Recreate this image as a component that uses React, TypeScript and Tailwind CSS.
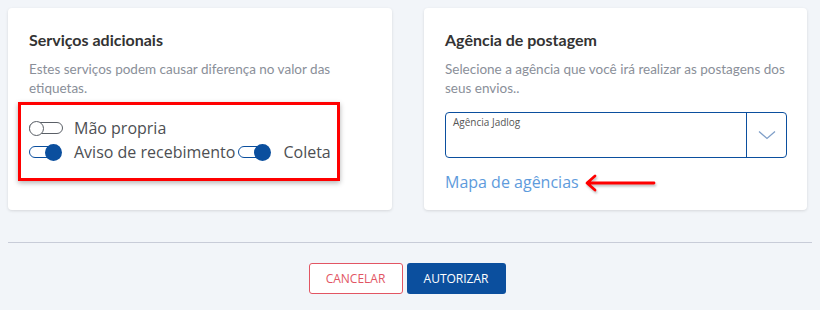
import { useState } from "react";

// Toggle simples (off = contorno cinza, on = bolinha azul)
const Toggle = ({ on, onClick }: { on: boolean; onClick: () => void }) => {
  return (
    <button
      onClick={onClick}
      className="relative w-[34px] h-[17px] shrink-0 flex items-center"
    >
      <span
        className={
          on
            ? "absolute left-0 right-[4px] h-[12px] rounded-full border border-[#0b4f9e] bg-white"
            : "absolute left-0 right-0 h-[12px] rounded-full border border-[#5a5f66] bg-white"
        }
      />
      {on ? (
        <span className="absolute right-[1px] w-[17px] h-[17px] rounded-full bg-[#0b4f9e]" />
      ) : (
        <span className="absolute left-0 w-[15px] h-[15px] rounded-full border border-[#5a5f66] bg-white" />
      )}
    </button>
  );
};

const Servico = ({
  label,
  on,
  onClick,
}: {
  label: string;
  on: boolean;
  onClick: () => void;
}) => (
  <div className="flex items-center h-[24px]">
    <Toggle on={on} onClick={onClick} />
    <span className="ml-[11px] text-[16px] text-[#4d4f53] font-['Open_Sans',sans-serif]">
      {label}
    </span>
  </div>
);

export default function App() {
  const [maoPropria, setMaoPropria] = useState(false);
  const [aviso, setAviso] = useState(true);
  const [coleta, setColeta] = useState(true);

  return (
    <div className="w-[820px] h-[310px] bg-[#f2f5f9] px-[8px] pt-[8px] font-['Lato',sans-serif]">
      <div className="grid grid-cols-[384px_383px] gap-[32px]">
        {/* Serviços adicionais */}
        <div className="h-[202px] bg-white rounded-[4px] shadow-[0_1px_3px_rgba(0,0,0,0.12)] pl-[21px] pr-[20px] pt-[22px]">
          <h3 className="text-[16px] leading-[20px] font-bold text-[#333]">
            Serviços adicionais
          </h3>
          <p className="mt-[10px] text-[13.5px] leading-[19px] text-[#8a8f99]">
            Estes serviços podem causar diferença no valor das etiquetas.
          </p>
          <div className="mt-[4px] -ml-[11px] w-[322px] h-[79px] border-[3px] border-[#ff0000] shadow-[0_2px_5px_rgba(0,0,0,0.3)] pl-[8px] pt-[11px]">
            <Servico
              label="Mão propria"
              on={maoPropria}
              onClick={() => setMaoPropria(!maoPropria)}
            />
            <div className="flex items-center gap-[3px]">
              <Servico
                label="Aviso de recebimento"
                on={aviso}
                onClick={() => setAviso(!aviso)}
              />
              <Servico
                label="Coleta"
                on={coleta}
                onClick={() => setColeta(!coleta)}
              />
            </div>
          </div>
        </div>

        {/* Agência de postagem */}
        <div className="h-[202px] bg-white rounded-[4px] shadow-[0_1px_3px_rgba(0,0,0,0.12)] pl-[21px] pr-[20px] pt-[22px]">
          <h3 className="text-[16px] leading-[20px] font-bold text-[#333]">
            Agência de postagem
          </h3>
          <p className="mt-[10px] text-[13.5px] leading-[19px] text-[#8a8f99]">
            Selecione a agência que você irá realizar as postagens dos seus envios..
          </p>
          <div className="mt-[14px] w-[342px] h-[46px] border border-[#0b4f9e] rounded-[4px] flex">
            <div className="flex-1 pl-[7px] pt-[2px] text-[10px] leading-[14px] text-[#555] font-['Open_Sans',sans-serif]">
              Agência Jadlog
            </div>
            <div className="w-[40px] border-l border-[#0b4f9e] flex items-center justify-center">
              <svg width="18" height="10" viewBox="0 0 18 10" fill="none">
                <path d="M1 1.5 L9 8.5 L17 1.5" stroke="#7f9fc8" strokeWidth="1.3" />
              </svg>
            </div>
          </div>
          <div className="mt-[12px] flex items-center">
            <a className="text-[16px] leading-[24px] text-[#5e9bdc] font-['Open_Sans',sans-serif] cursor-pointer">
              Mapa de agências
            </a>
            <svg width="72" height="18" viewBox="0 0 72 18" className="ml-[5px] mt-[2px] drop-shadow-[1px_2px_1px_rgba(0,0,0,0.25)]" fill="none">
              <path d="M70 9 H4 M11 2 L3 9 L11 16" stroke="#ff0000" strokeWidth="2.8" strokeLinecap="round" strokeLinejoin="round" />
            </svg>
          </div>
        </div>
      </div>

      <hr className="mt-[32px] border-t border-[#c8ccd8]" />

      <div className="mt-[20px] flex justify-center gap-[4px] pr-[6px] font-['Open_Sans',sans-serif]">
        <button className="w-[94px] h-[31px] border border-[#e25563] rounded-[3px] text-[12px] text-[#e25563] bg-white">
          CANCELAR
        </button>
        <button className="w-[99px] h-[31px] rounded-[3px] text-[12px] text-white bg-[#0b4f9e]">
          AUTORIZAR
        </button>
      </div>
    </div>
  );
}
